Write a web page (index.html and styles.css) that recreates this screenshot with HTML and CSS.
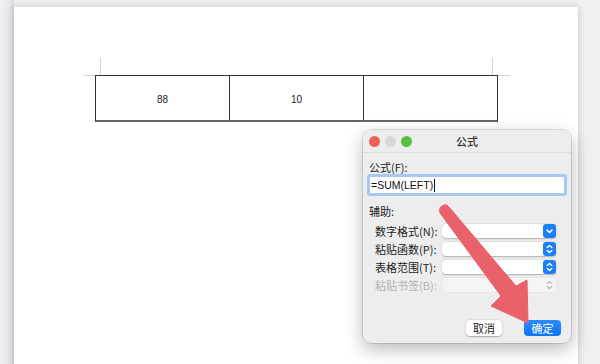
FILE: index.html
```html
<!DOCTYPE html>
<html lang="zh">
<head>
<meta charset="utf-8">
<link rel="stylesheet" href="styles.css">
</head>
<body>
<div class="page">
  <div class="guide"><div class="guide-inner"></div></div>
  <div class="table">
    <div class="cell">88</div>
    <div class="cell">10</div>
    <div class="cell"></div>
  </div>
</div>

<div class="dialog">
  <div class="titlebar">
    <div class="lights"><span class="light red"></span><span class="light gray"></span><span class="light green"></span></div>
    <div class="title">公式</div>
  </div>
  <div class="body">
    <div class="label">公式(F):</div>
    <div class="input"><span class="formula">=SUM(LEFT)</span><span class="caret"></span></div>
    <div class="label aux">辅助:</div>
    <div class="rows">
      <div class="row"><span class="rlabel">数字格式(N):</span><div class="select"><span class="stepper"><svg width="13" height="14" viewBox="0 0 13 14"><path d="M4 6 L6.5 8.5 L9 6" fill="none" stroke="#fff" stroke-width="1.5" stroke-linecap="round" stroke-linejoin="round"/></svg></span></div></div>
      <div class="row"><span class="rlabel">粘贴函数(P):</span><div class="select"><span class="stepper"><svg width="13" height="14" viewBox="0 0 13 14"><path d="M4.2 5.6 L6.5 3.5 L8.8 5.6 M4.2 8.4 L6.5 10.5 L8.8 8.4" fill="none" stroke="#fff" stroke-width="1.4" stroke-linecap="round" stroke-linejoin="round"/></svg></span></div></div>
      <div class="row"><span class="rlabel">表格范围(T):</span><div class="select"><span class="stepper"><svg width="13" height="14" viewBox="0 0 13 14"><path d="M4.2 5.6 L6.5 3.5 L8.8 5.6 M4.2 8.4 L6.5 10.5 L8.8 8.4" fill="none" stroke="#fff" stroke-width="1.4" stroke-linecap="round" stroke-linejoin="round"/></svg></span></div></div>
      <div class="row disabled"><span class="rlabel">粘贴书签(B):</span><div class="select"><span class="stepper"><svg width="13" height="14" viewBox="0 0 13 14"><path d="M4.2 5.6 L6.5 3.5 L8.8 5.6 M4.2 8.4 L6.5 10.5 L8.8 8.4" fill="none" stroke="#b8b8b8" stroke-width="1.2" stroke-linecap="round" stroke-linejoin="round"/></svg></span></div></div>
    </div>
    <div class="buttons">
      <div class="btn cancel">取消</div>
      <div class="btn ok">确定</div>
    </div>
  </div>
</div>

<svg class="arrow" width="600" height="364" viewBox="0 0 600 364">
  <path d="M440 213 Q438 207 444 205 Q447 204 449 207 L516 286 L527 280 L528 323 L491 306 L501 296 Z" fill="#e9626b" stroke="#e9626b" stroke-width="1" stroke-linejoin="round"/>
</svg>
</body>
</html>
```
FILE: styles.css
```css
html, body {
  margin: 0;
  padding: 0;
}
body {
  width: 600px;
  height: 364px;
  overflow: hidden;
  position: relative;
  background: linear-gradient(90deg, #f1f2f4 0px, #e4e6e9 10px, #d6d8db 14px, #eef0f2 14px);
  font-family: "Liberation Sans", "Noto Sans CJK SC", sans-serif;
}
.page {
  margin: 7px 0 0 14px;
  width: 564px;
  height: 370px;
  background: #fff;
  box-shadow: 0 0 8px rgba(0, 0, 0, 0.18);
  box-sizing: border-box;
  padding: 51px 0 0 81px;
}
.guide {
  margin-left: -12px;
  width: 427px;
  height: 17px;
  border-bottom: 1px solid #d6d6d6;
}
.guide-inner {
  margin: 0 17px;
  height: 17px;
  border-left: 1px solid #d2d2d2;
  border-right: 1px solid #d2d2d2;
}
.table {
  margin-top: -1px;
  width: 403px;
  height: 47px;
  box-sizing: border-box;
  border: 1px solid #333;
  border-bottom: 2px solid #666;
  display: grid;
  grid-template-columns: 134px 134px 1fr;
}
.cell {
  display: flex;
  align-items: center;
  justify-content: center;
  font-size: 10px;
  color: #222;
  border-right: 1px solid #333;
  padding-top: 2px;
}
.cell:last-child {
  border-right: none;
}
.dialog {
  position: absolute;
  left: 363px;
  top: 130px;
  width: 208px;
  height: 213px;
  background: #ededed;
  border-radius: 8px;
  box-shadow: 0 0 0 0.5px rgba(0, 0, 0, 0.22), 0 6px 18px rgba(0, 0, 0, 0.28);
  font-family: "Noto Sans CJK SC", "Liberation Sans", sans-serif;
  font-size: 11px;
  color: #222;
  overflow: hidden;
}
.titlebar {
  height: 22px;
  position: relative;
  display: flex;
  align-items: center;
  border-bottom: 1px solid #dcdcdc;
  background: #ededed;
}
.lights {
  display: flex;
  gap: 5px;
  padding-left: 6px;
}
.light {
  width: 11px;
  height: 11px;
  border-radius: 50%;
}
.light.red { background: #ee5f58; }
.light.gray { background: #d8d8d8; }
.light.green { background: #58c041; }
.title {
  position: absolute;
  left: 0;
  right: 0;
  text-align: center;
  font-size: 11px;
  font-weight: 500;
  color: #333;
}
.body {
  padding: 0 4px 0 4px;
  display: flex;
  flex-direction: column;
}
.label {
  margin-top: 7px;
  padding-left: 2px;
  line-height: 14px;
  height: 14px;
}
.input {
  margin-top: 0;
  height: 22px;
  box-sizing: border-box;
  border: 3px solid #a5c8f4;
  border-radius: 3px;
  background: #fff;
  display: flex;
  align-items: center;
  padding-left: 1px;
}
.formula {
  font-family: "Liberation Sans", sans-serif;
  font-size: 10.5px;
  color: #111;
}
.caret {
  width: 1px;
  height: 13px;
  background: #111;
  margin-left: 1px;
}
.label.aux {
  margin-top: 8px;
}
.rows {
  margin-top: 6px;
  display: flex;
  flex-direction: column;
  gap: 4px;
}
.row {
  display: flex;
  align-items: center;
  height: 14px;
  padding-left: 8px;
}
.rlabel {
  width: 67px;
  line-height: 14px;
}
.select {
  width: 114px;
  height: 14px;
  background: #fff;
  border-radius: 4px;
  box-shadow: 0 0.5px 1.5px rgba(0, 0, 0, 0.25);
  display: flex;
  justify-content: flex-end;
}
.stepper {
  width: 13px;
  height: 14px;
  background: #1b7ff7;
  border-radius: 3px;
  display: block;
}
.stepper svg {
  display: block;
}
.row.disabled .rlabel {
  color: #b4b4b4;
}
.row.disabled .select {
  background: #f4f4f4;
  box-shadow: 0 0 0 0.5px rgba(0, 0, 0, 0.06);
}
.row.disabled .stepper {
  background: transparent;
}
.buttons {
  margin-top: 28px;
  display: flex;
  justify-content: flex-end;
  gap: 22px;
  padding-right: 6px;
}
.btn {
  height: 16px;
  line-height: 16px;
  text-align: center;
  border-radius: 4px;
  font-size: 11px;
}
.btn.cancel {
  width: 36px;
  background: #fff;
  color: #222;
  box-shadow: 0 0.5px 1.5px rgba(0, 0, 0, 0.3);
}
.btn.ok {
  width: 37px;
  background: linear-gradient(#2c8cff, #0f74f0);
  color: #fff;
}
.arrow {
  position: absolute;
  left: 0;
  top: 0;
  pointer-events: none;
}
```
